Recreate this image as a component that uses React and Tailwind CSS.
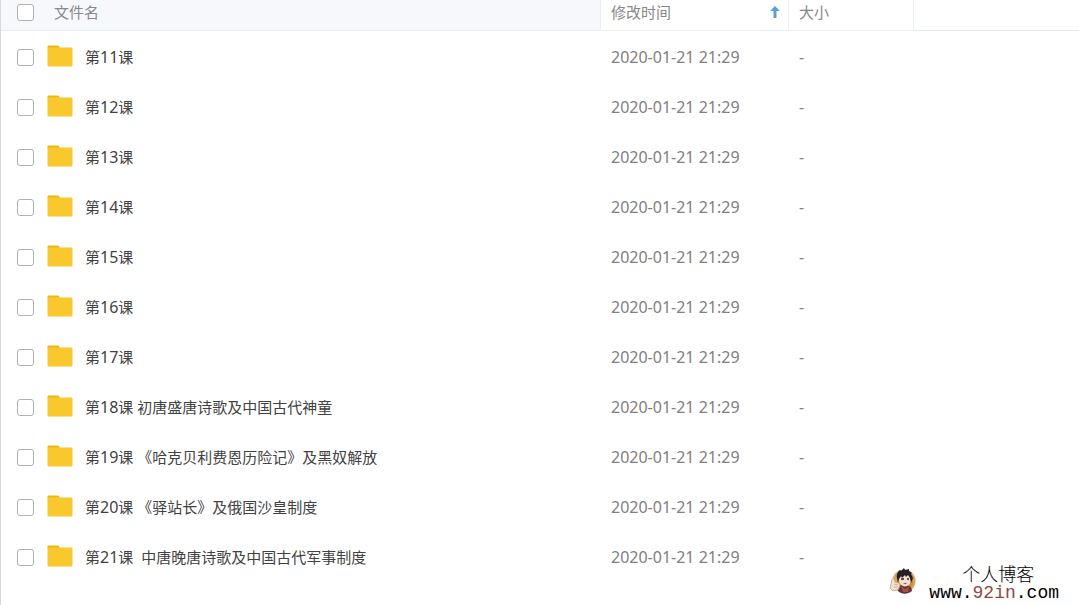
import { useState } from 'react'

const lessons = [
  { no: 11, title: '' },
  { no: 12, title: '' },
  { no: 13, title: '' },
  { no: 14, title: '' },
  { no: 15, title: '' },
  { no: 16, title: '' },
  { no: 17, title: '' },
  { no: 18, title: ' 初唐盛唐诗歌及中国古代神童' },
  { no: 19, title: ' 《哈克贝利费恩历险记》及黑奴解放' },
  { no: 20, title: ' 《驿站长》及俄国沙皇制度' },
  { no: 21, title: '  中唐晚唐诗歌及中国古代军事制度' },
]

const Checkbox = ({ label, checked, onChange }) => (
  <input
    type="checkbox"
    aria-label={label}
    checked={checked}
    onChange={onChange}
    className="block size-[17px] shrink-0 appearance-none rounded-[3px] border border-[#b0b0b0] bg-white checked:bg-[#5b9fd6]"
  />
)

const FolderIcon = () => (
  <svg width="26" height="24" viewBox="0 0 26 24" className="shrink-0" aria-hidden="true">
    <rect x="0.5" y="2.5" width="25" height="19" rx="1.5" fill="#f8c82c" />
    <path d="M0.5 4V1.5a1 1 0 0 1 1-1h10l1.5 2.3H2z" fill="#edb80d" />
  </svg>
)

const SortArrow = () => (
  <svg width="10" height="12" viewBox="0 0 10 12" aria-hidden="true">
    <path d="M5 0l5 5H6.5v7h-3V5H0z" fill="#5b9fd6" />
  </svg>
)

const Avatar = () => (
  <svg width="28" height="28" viewBox="0 0 28 28" aria-hidden="true">
    <circle cx="15" cy="14" r="11.5" fill="#d8a45c" />
    <path d="M20 6c4 3 5 8 3 13l-4 2-1-13z" fill="#c98c3d" />
    <path d="M9 19l6-2 7 3 1 4c-5 4-11 3-14 0z" fill="#65333a" />
    <path d="M12 19l4 3 4-2-1 5h-5z" fill="#a45148" />
    <ellipse cx="16" cy="13" rx="6" ry="6.5" fill="#f4ded0" />
    <path d="M8 11c-1-3 1-7 3-8l1 1 3-3 1 2 4-1v2l3 2-1 1 2 4-2 5-1-5-2-3-2 2-1-2-3 3-1-2-2 3-1 4z" fill="#241f25" />
    <path d="M12 12h3M18 12h2" stroke="#2b2226" strokeWidth="1.5" />
    <path d="M14 16q3 1 4-1-1 4-4 1z" fill="#9b3935" />
    <path d="M3 12l2-1 1 4 4 1 1 3-2 4-5 1-3-3 1-4z" fill="#f1dfcb" stroke="#b99b82" strokeWidth="0.7" />
    <path d="M5 17l4 1M5 20h4" stroke="#c3a388" strokeWidth="0.7" />
  </svg>
)

const App = () => {
  const [selected, setSelected] = useState([])

  const toggle = (no) => {
    setSelected(selected.includes(no) ? selected.filter((n) => n !== no) : [...selected, no])
  }

  const toggleAll = () => {
    setSelected(selected.length === lessons.length ? [] : lessons.map((l) => l.no))
  }

  return (
    <div className="relative min-h-screen border-l border-[#d8d8d8] bg-white font-['Noto_Sans','Noto_Sans_CJK_SC',sans-serif] text-[15px] leading-6">
      <table className="w-full table-fixed border-separate border-spacing-0 text-left">
        <colgroup>
          <col />
          <col className="w-[188px]" />
          <col className="w-[125px]" />
          <col className="w-[165px]" />
        </colgroup>
        <thead>
          <tr className="text-[#888888]">
            <th className="border-r border-b border-[#e8eef4] bg-[#f6f8fc] p-0 pb-[6px] pl-4 font-normal">
              <div className="flex items-center gap-5">
                <Checkbox
                  label="全选"
                  checked={selected.length === lessons.length}
                  onChange={toggleAll}
                />
                <span>文件名</span>
              </div>
            </th>
            <th aria-sort="ascending" className="border-r border-b border-[#e8eef4] p-0 pb-[6px] pl-[10px] font-normal">
              <button type="button" className="flex w-full items-center justify-between pr-2">
                修改时间
                <SortArrow />
              </button>
            </th>
            <th className="border-r border-b border-[#e8eef4] p-0 pb-[6px] pl-[10px] font-normal">大小</th>
            <td className="border-b border-[#e4ebf2]" />
          </tr>
        </thead>
        <tbody>
          {lessons.map(({ no, title }) => (
            <tr key={no} className="h-[50px] text-[#808080]">
              <td className="p-0 pt-[2px] pl-4">
                <div className="flex items-center">
                  <Checkbox
                    label={`第${no}课`}
                    checked={selected.includes(no)}
                    onChange={() => toggle(no)}
                  />
                  <div className="ml-[13px] flex items-center gap-3">
                    <FolderIcon />
                    <span className="whitespace-pre text-[#424242]">
                      第<span className="text-base">{no}</span>课{title}
                    </span>
                  </div>
                </div>
              </td>
              <td className="p-0 pt-[2px] pl-[10px] text-base">2020-01-21 21:29</td>
              <td className="p-0 pt-[2px] pl-[10px] text-base">-</td>
              <td />
            </tr>
          ))}
        </tbody>
      </table>

      <div className="absolute right-5 bottom-1 flex items-center gap-3 text-black">
        <Avatar />
        <div className="text-center">
          <div className="pl-2 font-['Noto_Sans_CJK_SC',sans-serif] text-lg leading-6 font-light">个人博客</div>
          <div className="font-['Liberation_Mono',monospace] text-lg leading-4">
            www.<span className="text-[#8c4a3c]">92in</span>.com
          </div>
        </div>
      </div>
    </div>
  )
}

export default App
